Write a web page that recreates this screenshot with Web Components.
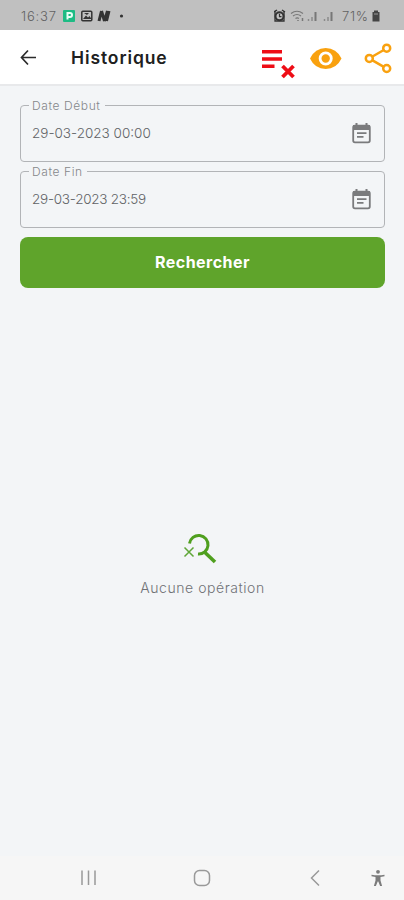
<!DOCTYPE html>
<html lang="fr">
<head>
<meta charset="utf-8">
<title>Historique</title>
<style>
  html, body {
    margin: 0;
    height: 100%;
  }
  body {
    font-family: Inter, "Open Sans", sans-serif;
    background: #f3f5f7;
    overflow: hidden;
  }
</style>
</head>
<body>
<history-page></history-page>

<script>
const define = (name, html) => {
  const template = document.createElement("template");
  template.innerHTML = html;
  customElements.define(
    name,
    class extends HTMLElement {
      constructor() {
        super();
        this.attachShadow({ mode: "open" }).appendChild(template.content.cloneNode(true));
      }
    }
  );
};

define("status-bar", `
  <style>
    :host {
      display: flex;
      align-items: center;
      box-sizing: border-box;
      height: 30px;
      padding: 2px 23px 0 21px;
      background: #c0c0c0;
      color: #626262;
      font-size: 13px;
      font-weight: 300;
    }
    .time { width: 42px; letter-spacing: .8px; white-space: nowrap; }
    .battery { letter-spacing: .7px; width: 29px; white-space: nowrap; }
    .space { flex: 1; }
    .signals { margin-right: 6px; }
    svg { display: block; flex: none; }
  </style>
  <span class="time">16:37</span>
  <svg width="62" height="14" viewBox="0 0 62 14">
    <rect x="0" y="1" width="12" height="12" rx="1" fill="#1dbb84"/>
    <path d="M4.5 10.500V4H7a2 2 0 0 1 0 4H4.500" fill="none" stroke="#e8fff6" stroke-width="2"/>
    <rect x="18.800" y="2.300" width="10" height="9.500" rx="1" fill="none" stroke="#333" stroke-width="1.500"/>
    <path d="M20 10l3-3.500 2 2 1.500-1.500 2 3zM21 4h5l-2 2z" fill="#333"/>
    <path d="M36 12l2.500-10M38.500 2l3 10M41.500 12l3-10M46 2l-2.500 10" fill="none" stroke="#333" stroke-width="3"/>
    <circle cx="58.500" cy="7" r="1.600" fill="#333"/>
  </svg>
  <span class="space"></span>
  <svg class="signals" width="62" height="14" viewBox="0 0 62 14">
    <path d="M0 3l3-2M11 3L8 1" stroke="#333" stroke-width="1.500"/>
    <circle cx="5.500" cy="7.200" r="4" fill="none" stroke="#333" stroke-width="2"/>
    <path d="M1 2v10h9V2" fill="none" stroke="#333" stroke-width="1.300"/>
    <path d="M5.500 4.800v2.800h2" fill="none" stroke="#333" stroke-width="1.200"/>
    <path d="M17 4.500q6-4.500 12 0M19 7q4-3 8 0M21.500 9.500q1.700-1.400 3.400 0" fill="none" stroke="#777" stroke-width="1.200"/>
    <path d="M24 12v-1M28.500 12V9" stroke="#777" stroke-width="1.500"/>
    <path d="M34.500 12v-2M38 12V8M50.500 12v-2M54 12V8" stroke="#8a8a8a" stroke-width="1.500"/>
    <path d="M41.500 12V3M57.500 12V3" stroke="#777" stroke-width="2"/>
  </svg>
  <span class="battery">71%</span>
  <svg width="10" height="14" viewBox="0 0 10 14">
    <path d="M3 1.500h4V3h1.500v9.500h-7V3H3z" fill="#444"/>
    <path d="M3 5h4" stroke="#999"/>
  </svg>
`);

define("app-header", `
  <style>
    :host {
      display: flex;
      align-items: center;
      box-sizing: border-box;
      height: 56px;
      padding: 0 12px 0 20px;
      background: #fff;
      border-bottom: 2px solid #e8e9eb;
    }
    h1 {
      flex: 1;
      margin: 1px 0 0 34px;
      font-size: 17.500px;
      font-weight: 600;
      letter-spacing: .9px;
      color: #202020;
    }
    svg { display: block; flex: none; }
  </style>
  <svg width="17" height="18" viewBox="0 0 17 18">
    <path d="M16 9.500H2M8 2.500L1.500 9.500 8 16.500" fill="none" stroke="#2b2b2b" stroke-width="1.700"/>
  </svg>
  <h1><slot></slot></h1>
  <svg width="131" height="44" viewBox="0 -4 131 44">
    <path d="M1 12.800h20M1 20h20M1 27.300h12.500" stroke="#ee0d16" stroke-width="3.500"/>
    <path d="M21.500 27l11 11M32.500 27l-11 11" stroke="#ee0d16" stroke-width="3.800"/>
    <path d="M49 19.500Q54 9 64.700 9T80.500 19.500Q75.500 30 64.700 30T49 19.500z" fill="#f9a10f"/>
    <circle cx="64.700" cy="19.500" r="5.600" fill="#f9a10f" stroke="#fff" stroke-width="2.800"/>
    <g fill="none" stroke="#f9a10f" stroke-width="2.500">
      <path d="M111.500 17.500l11.300-6.500M111.500 21.300l11.300 6.500"/>
      <circle cx="108.300" cy="19.400" r="3.500"/>
      <circle cx="125.700" cy="9.200" r="3.500"/>
      <circle cx="125.700" cy="29.500" r="3.500"/>
    </g>
  </svg>
`);

define("date-field", `
  <style>
    :host { display: block; }
    fieldset {
      display: flex;
      align-items: center;
      box-sizing: border-box;
      height: 64px;
      margin: 0;
      padding: 0 12px 7px 8px;
      border: 1px solid #b2b4b7;
      border-radius: 4px;
      min-width: 0;
    }
    legend {
      height: 14px;
      line-height: 15px;
      padding: 0 4px 0 3px;
      font-size: 12px;
      font-weight: 300;
      letter-spacing: .6px;
      color: #85878a;
    }
    .value {
      flex: 1;
      padding-left: 3px;
      font-size: 13.500px;
      font-weight: 300;
      letter-spacing: var(--value-spacing, 0);
      color: #606265;
    }
    svg { display: block; }
  </style>
  <fieldset>
    <legend><slot name="label"></slot></legend>
    <span class="value"><slot></slot></span>
    <svg width="21" height="23" viewBox="0 0 21 23">
      <rect x="2.200" y="3.700" width="16.600" height="16.600" rx="1.800" fill="none" stroke="#7a7b7d" stroke-width="1.800"/>
      <path d="M2 3h17v5H2z" fill="#7a7b7d"/>
      <path d="M5.500 1v3M15.500 1v3" stroke="#7a7b7d" stroke-width="2"/>
      <path d="M6 11.200h9.500M6 14.800h6.500" stroke="#7a7b7d" stroke-width="1.700"/>
    </svg>
  </fieldset>
`);

define("search-button", `
  <style>
    :host { display: block; }
    button {
      display: block;
      width: 100%;
      height: 51px;
      padding: 0 0 1px;
      border: 0;
      border-radius: 8px;
      background: #5fa42b;
      color: #fff;
      font: 700 16px Inter, sans-serif;
      letter-spacing: .45px;
    }
  </style>
  <button><slot></slot></button>
`);

define("empty-state", `
  <style>
    :host {
      display: flex;
      flex-direction: column;
      align-items: center;
      gap: 13px;
      font-size: 14px;
      font-weight: 300;
      line-height: 20px;
      letter-spacing: .55px;
      color: #707276;
    }
    svg { display: block; margin-right: 6px; }
  </style>
  <svg width="34" height="32" viewBox="0 0 34 32">
    <path d="M6.500 10.500A9.300 9.300 0 1 1 15 21" fill="none" stroke="#4f9f1e" stroke-width="3"/>
    <path d="M22 19.500l10 9.500" stroke="#4f9f1e" stroke-width="3.600"/>
    <path d="M1.500 14.500l9 9M10.500 14.500l-9 9" stroke="#5fa638" stroke-width="1.500"/>
  </svg>
  <slot></slot>
`);

define("system-nav", `
  <style>
    :host {
      display: flex;
      align-items: center;
      justify-content: space-between;
      box-sizing: border-box;
      height: 44px;
      padding: 0 18px 0 80px;
      background: #f6f6f6;
    }
    svg { display: block; fill: none; stroke: #999; stroke-width: 1.500; }
    .home { margin-right: 2px; }
    .end { display: flex; gap: 50px; }
    .person { fill: #7c7c7c; stroke: none; }
  </style>
  <svg width="16" height="18" viewBox="0 0 16 18"><path d="M2 1.500v14.500M8.500 1.500v14.500M15 1.500v14.500"/></svg>
  <svg class="home" width="18" height="18" viewBox="0 0 18 18"><rect x="1.500" y="1.500" width="15" height="15" rx="5"/></svg>
  <div class="end">
    <svg width="10" height="18" viewBox="0 0 10 18"><path d="M9 1.500L1.500 9 9 16.500"/></svg>
    <svg class="person" width="16" height="18" viewBox="0 0 16 18">
      <circle cx="8" cy="2.800" r="1.900"/>
      <path d="M1.500 5.700q6.500 1 13 0v1.600l-4 .7v3.500l1.600 5.500h-2L8.300 12.500h-.6L5.900 17h-2l1.600-5.500V8l-4-.7z"/>
    </svg>
  </div>
`);

define("history-page", `
  <style>
    :host {
      display: flex;
      flex-direction: column;
      height: 900px;
      background: #f3f5f7;
    }
    main {
      flex: 1;
      display: flex;
      flex-direction: column;
      padding: 12px 19px 0 20px;
    }
    date-field + date-field { margin-top: 2px; --value-spacing: -.25px; }
    search-button { margin-top: 9px; }
    empty-state { margin-top: 245px; }
  </style>
  <status-bar></status-bar>
  <app-header>Historique</app-header>
  <main>
    <date-field><span slot="label">Date Début</span>29-03-2023 00:00</date-field>
    <date-field><span slot="label">Date Fin</span>29-03-2023 23:59</date-field>
    <search-button>Rechercher</search-button>
    <empty-state>Aucune opération</empty-state>
  </main>
  <system-nav></system-nav>
`);
</script>
</body>
</html>
